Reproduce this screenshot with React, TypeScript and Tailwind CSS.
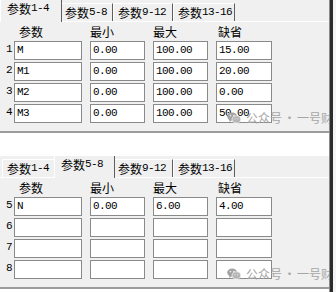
import React from 'react'

const CJK = "font-['Noto_Sans_CJK_SC',sans-serif]"
const MONO = "font-['Liberation_Mono',monospace] text-[11px] tracking-[-0.6px]"

type Row = { n: number; name: string; min: string; max: string; def: string }

const tabs = [
  { num: '1-4', w: 'w-[54px]' },
  { num: '5-8', w: 'w-[53px]' },
  { num: '9-12', w: 'w-[60px]' },
  { num: '13-16', w: 'w-[62px]' },
]

const cols = ['w-[68px]', 'w-[55px]', 'w-[55px]', 'w-[56px]']

function WeChat() {
  return (
    <svg width="14" height="12" viewBox="0 0 14 12" className="mr-[5px]">
      <ellipse cx="5.2" cy="4.6" rx="5" ry="4.2" fill="#a3a3a3" />
      <path d="M2.6 7.6 L2 10 L4.6 8.6 Z" fill="#a3a3a3" />
      <ellipse cx="9.4" cy="7.4" rx="4.3" ry="3.6" fill="#b5b5b5" stroke="#f0f0f0" strokeWidth="0.8" />
      <path d="M11.8 10 L12.6 11.8 L10.4 10.6 Z" fill="#b5b5b5" />
      <circle cx="3.5" cy="3.6" r="0.8" fill="#f0f0f0" />
      <circle cx="6.9" cy="3.6" r="0.8" fill="#f0f0f0" />
      <circle cx="8" cy="6.8" r="0.6" fill="#f0f0f0" />
      <circle cx="10.8" cy="6.8" r="0.6" fill="#f0f0f0" />
    </svg>
  )
}

function Box({ w, value }: { w: string; value: string }) {
  return (
    <div className={`${w} h-[19px] border border-[#8a8a8a] bg-white pl-[2px] flex items-center text-black ${MONO}`}>
      {value}
    </div>
  )
}

function Panel({ active, rows }: { active: number; rows: Row[] }) {
  return (
    <div className="relative h-[133px] bg-[#f0f0f0] border-b-2 border-b-[#9c9c9c] overflow-hidden">
      {/* 탭 */}
      <div className="flex items-end h-[21px] pl-[2px]">
        {tabs.map((t, i) => {
          const on = i === active
          return (
            <div
              key={t.num}
              className={`${t.w} flex items-center text-black text-[12px] leading-none border-t border-l border-t-white border-l-white border-r border-r-[#5e5e5e] bg-[#f0f0f0] ${
                on ? 'relative z-10 h-[21px] -mx-[2px] pl-[6px] pb-[3px] -mb-px box-content' : 'h-[18px] pl-[4px]'
              }`}
            >
              <span className={CJK}>参数</span>
              <span className={MONO}>{t.num}</span>
            </div>
          )
        })}
      </div>

      <div className="border-t border-t-white">
        {/* 헤더 */}
        <div className={`flex h-[19px] items-center gap-[8px] pl-[14px] text-[12px] text-black ${CJK}`}>
          <div className={`${cols[0]} pl-[5px]`}>参数</div>
          <div className={cols[1]}>最小</div>
          <div className={cols[2]}>最大</div>
          <div className={`${cols[3]} pl-[2px]`}>缺省</div>
        </div>

        <div className="flex flex-col gap-[2px]">
          {rows.map((r) => (
            <div key={r.n} className="flex items-center">
              <div className={`w-[14px] pl-[6px] pb-[2px] text-black ${MONO}`}>{r.n}</div>
              <div className="flex gap-[8px]">
                <Box w={cols[0]} value={r.name} />
                <Box w={cols[1]} value={r.min} />
                <Box w={cols[2]} value={r.max} />
                <Box w={cols[3]} value={r.def} />
              </div>
            </div>
          ))}
        </div>
      </div>

      {/* 워터마크 */}
      <div className={`absolute left-[227px] top-[110px] flex items-center text-[12px] leading-[16px] text-[#a6a6a6] whitespace-nowrap ${CJK}`}>
        <WeChat />
        <span>公众号</span>
        <span className="mx-[1.5px]">·</span>
        <span>一号财商</span>
      </div>
    </div>
  )
}

const top: Row[] = [
  { n: 1, name: 'M', min: '0.00', max: '100.00', def: '15.00' },
  { n: 2, name: 'M1', min: '0.00', max: '100.00', def: '20.00' },
  { n: 3, name: 'M2', min: '0.00', max: '100.00', def: '0.00' },
  { n: 4, name: 'M3', min: '0.00', max: '100.00', def: '50.00' },
]

const bottom: Row[] = [
  { n: 5, name: 'N', min: '0.00', max: '6.00', def: '4.00' },
  { n: 6, name: '', min: '', max: '', def: '' },
  { n: 7, name: '', min: '', max: '', def: '' },
  { n: 8, name: '', min: '', max: '', def: '' },
]

export default function App() {
  return (
    <div className="w-[336px] h-[292px] bg-white flex overflow-hidden">
      <div className="w-[329px] flex flex-col">
        <Panel active={0} rows={top} />
        <div className="h-[23px]" />
        <Panel active={1} rows={bottom} />
      </div>
      <div className="w-[4px] h-full bg-[#2b2b2b] border-l border-l-[#8a8a8a]" />
      <div className="flex-1 bg-[#f4f4f4]" />
    </div>
  )
}
